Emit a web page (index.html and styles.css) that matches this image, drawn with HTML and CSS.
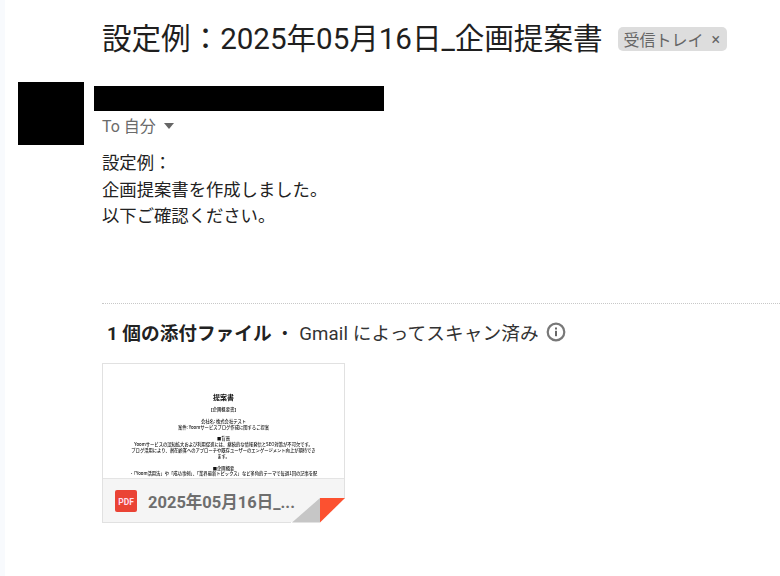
FILE: index.html
```html
<!DOCTYPE html>
<html lang="ja">
<head>
<meta charset="utf-8">
<title>設定例</title>
<link rel="stylesheet" href="styles.css">
</head>
<body>
<div class="rail"></div>
<main class="mail">
  <header class="subject">
    <h1 class="subject-text">設定例：2025年05月16日_企画提案書</h1>
    <span class="label">受信トレイ<span class="label-x">×</span></span>
  </header>
  <section class="sender">
    <div class="avatar"></div>
    <div class="sender-info">
      <div class="name-bar"></div>
      <div class="to">To 自分<span class="caret"></span></div>
    </div>
  </section>
  <div class="body-text">
    <p>設定例：</p>
    <p>企画提案書を作成しました。</p>
    <p>以下ご確認ください。</p>
  </div>
  <hr class="divider">
  <div class="att-head">
    <strong class="att-count">1 個の添付ファイル</strong>
    <span class="att-dot">・</span>
    <span class="att-scan">Gmail によってスキャン済み</span>
    <svg class="info" viewBox="0 0 20 20" width="20" height="20"><circle cx="10" cy="10" r="8.3" fill="none" stroke="#787878" stroke-width="2.2"/><rect x="9" y="8.8" width="2" height="5.4" fill="#666"/><rect x="9" y="5.5" width="2" height="2" fill="#666"/></svg>
  </div>
  <article class="card">
    <div class="thumb">
      <div class="doc-title">提案書</div>
      <div class="doc-line doc-sub">【企画概要書】</div>
      <div class="doc-line">会社名: 株式会社テスト</div>
      <div class="doc-line">案件: Yoomサービスブログ作成に関するご提案</div>
      <div class="doc-line doc-gap">■背景</div>
      <div class="doc-line">Yoomサービスの認知拡大および利用促進には、継続的な情報発信とSEO対策が不可欠です。</div>
      <div class="doc-line">ブログ活用により、潜在顧客へのアプローチや既存ユーザーのエンゲージメント向上が期待でき</div>
      <div class="doc-line">ます。</div>
      <div class="doc-line doc-gap">■企画概要</div>
      <div class="doc-line">・「Yoom活用法」や「成功事例」、「業界最新トピックス」など多角的テーマで毎週1回の記事を配</div>
    </div>
    <div class="card-foot">
      <svg class="pdf" viewBox="0 0 22 22" width="22" height="22"><rect width="22" height="22" rx="2" fill="#ea4335"/><text x="11" y="14.5" text-anchor="middle" class="pdf-text">PDF</text></svg>
      <span class="file-name">2025年05月16日_...</span>
    </div>
    <svg class="fold" viewBox="0 0 54 25" width="54" height="25"><path d="M54 0V25H0V24H29Z" fill="#fff"/><path d="M1 24.5 29 0V24.5Z" fill="#c6c6c6"/><path d="M29 0H54L29 24.5Z" fill="#fc5130"/></svg>
  </article>
</main>
</body>
</html>
```
FILE: styles.css
```css
* { box-sizing: border-box; }
html, body { margin: 0; height: 100%; }
body {
  display: flex;
  width: 780px;
  height: 576px;
  overflow: hidden;
  background: #fff;
  font-family: Roboto, "Noto Sans CJK JP", sans-serif;
  color: #222;
}
.rail { width: 5px; flex: none; background: #f8fafd; }
.mail { flex: 1; min-width: 0; padding-top: 17px; padding-left: 13px; }
.subject { display: flex; align-items: center; padding-left: 84px; height: 44px; }
.subject-text { margin: 0; font-size: 29.6px; font-weight: 400; line-height: 44px; color: #1f1f1f; white-space: nowrap; letter-spacing: -.05px; }
.label {
  display: inline-flex; align-items: center;
  margin-left: 16px; height: 24px; padding: 0 7px 0 5px;
  background: #ddd; border-radius: 5px;
  font-size: 16px; color: #666; white-space: nowrap;
}
.label-x { margin-left: 8px; font-size: 16px; }
.sender { display: flex; margin-top: 21px; height: 63px; }
.avatar { width: 66px; height: 63px; background: #000; flex: none; }
.sender-info { margin-left: 10px; padding-top: 4px; }
.name-bar { width: 290px; height: 25px; background: #000; }
.to { display: flex; align-items: center; height: 28px; padding-left: 8px; font-size: 16px; color: #6b6b6b; }
.caret { margin-left: 8px; margin-top: 1px; border: 5.5px solid transparent; border-top: 6px solid #666; border-bottom: 0; width: 0; }
.body-text { margin: 5px 0 0 84px; font-size: 17.33px; line-height: 26.5px; color: #222; }
.body-text p { margin: 0; }
.divider { margin: 73.5px 0 0 84px; border: 0; border-top: 1px dotted #c8c8c8; }
.att-head { display: flex; align-items: center; margin: 15px 0 0 89px; height: 24px; font-size: 18.67px; color: #222; white-space: nowrap; }
.att-count { font-weight: 700; }
.att-dot { margin: 0 5px 0 4px; }
.att-scan { color: #333; letter-spacing: .1px; }
.info { margin: 2px 0 0 7px; }
.card { position: relative; margin: 20px 0 0 84px; width: 243px; height: 160px; border: 1px solid #e1e1e1; background: #fff; }
.thumb { height: 115px; padding-top: 28px; text-align: center; font-family: "Noto Sans CJK JP", sans-serif; color: #111; filter: blur(.35px); overflow: hidden; }
.doc-title { font-size: 7px; font-weight: 700; line-height: 10px; }
.doc-line { font-size: 4.3px; line-height: 5.8px; white-space: nowrap; font-weight: 500; }
.doc-sub { margin: 5px 0 6px; }
.doc-gap { margin-top: 6px; }
.card-foot { position: absolute; left: 0; right: 0; bottom: 0; height: 44px; display: flex; align-items: center; padding-left: 12px; background: #f5f5f5; border-top: 1px solid #e4e4e4; }
.pdf { flex: none; }
.pdf-text { font: 700 8.5px Roboto, sans-serif; fill: #fde; }
.file-name { margin-left: 11px; font-size: 16.5px; font-weight: 700; color: #6e6e6e; white-space: nowrap; }
.fold { position: absolute; right: -1px; bottom: -1px; }
```
